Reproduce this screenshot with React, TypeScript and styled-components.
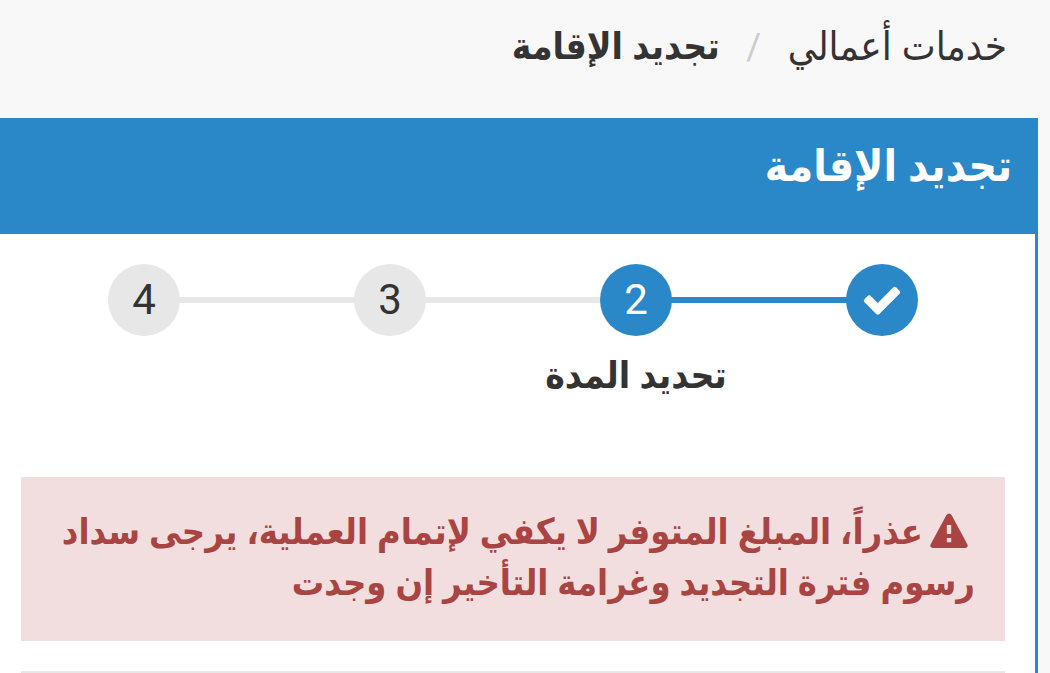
import React from "react";
import styled, { createGlobalStyle } from "styled-components";

const blue = "#2b88c8";
const grey = "#e7e7e7";
const ink = "#333333";

const GlobalStyle = createGlobalStyle`
  *, *::before, *::after { box-sizing: border-box; }
  body {
    margin: 0;
    background: #f8f8f8;
    color: ${ink};
    font-family: Roboto, "DejaVu Sans Condensed", "DejaVu Sans", sans-serif;
  }
`;

const Page = styled.div`
  min-height: 100vh;
  display: flex;
  flex-direction: column;
`;

const Breadcrumb = styled.nav`
  height: 118px;
  padding: 21px 43px 0;
`;

const Crumbs = styled.ol`
  display: flex;
  margin: 0;
  padding: 0;
  list-style: none;
  font-size: 36px;
  line-height: 52px;
`;

const Crumb = styled.li`
  display: flex;
  white-space: nowrap;

  &:not(:first-child)::before {
    content: "/";
    width: 68px;
    text-align: center;
    color: #cccccc;
  }
`;

const CrumbLink = styled.a`
  color: inherit;
  font-size: 40px;
  text-decoration: none;
`;

const CurrentCrumb = styled.span`
  font-size: 37px;
  font-weight: 700;
`;

const Panel = styled.main`
  flex: 1;
  display: flex;
  flex-direction: column;
  margin-right: 12px;
  border-right: 3px solid ${blue};
  background: #ffffff;
`;

const PanelHeader = styled.header`
  height: 116px;
  margin-right: -3px;
  padding: 18px 26px;
  background: ${blue};
  color: #ffffff;
`;

const PanelTitle = styled.h1`
  margin: 0;
  font-size: 44px;
  line-height: 60px;
  font-weight: 700;
`;

const PanelBody = styled.div`
  padding: 30px 30px 0 21px;
`;

const Steps = styled.ol`
  display: grid;
  grid-template-columns: repeat(4, 1fr);
  min-height: 213px;
  margin: 0;
  padding: 0;
  list-style: none;
`;

const Step = styled.li<{ $reached?: boolean }>`
  display: flex;
  flex-direction: column;
  align-items: center;
  position: relative;

  &:not(:first-child)::before {
    content: "";
    position: absolute;
    top: 33px;
    right: -50%;
    width: 100%;
    height: 6px;
    background: ${(p) => (p.$reached ? blue : grey)};
  }
`;

const StepCircle = styled.span<{ $active?: boolean }>`
  position: relative;
  z-index: 1;
  display: flex;
  align-items: center;
  justify-content: center;
  width: 72px;
  height: 72px;
  border-radius: 50%;
  background: ${(p) => (p.$active ? blue : grey)};
  color: ${(p) => (p.$active ? "#ffffff" : ink)};
  font-size: 42px;
  line-height: 72px;
`;

const StepLabel = styled.span`
  margin-top: 14px;
  font-size: 37px;
  line-height: 52px;
  font-weight: 700;
  white-space: nowrap;
`;

const Alert = styled.p`
  margin: 0 0 30px;
  min-height: 164px;
  padding: 30px;
  background: #f2dede;
  color: #a94442;
  font-size: 36px;
  line-height: 51px;
  font-weight: 700;
`;

const AlertIcon = styled.svg`
  width: 38px;
  height: 36px;
  margin: 0 7px;
  vertical-align: -5px;
`;

const Divider = styled.hr`
  margin: 0;
  border: 0;
  border-top: 2px solid ${grey};
`;

const CheckMark = () => (
  <svg width="42" height="42" viewBox="0 0 1792 1792" fill="currentColor" role="img" aria-label="مكتمل">
    <path d="M1671 566q0 40-28 68l-724 724-136 136q-28 28-68 28t-68-28l-136-136-362-362q-28-28-28-68t28-68l136-136q28-28 68-28t68 28l294 295 656-657q28-28 68-28t68 28l136 136q28 28 28 68z" />
  </svg>
);

const Warning = () => (
  <AlertIcon viewBox="0 0 38 36" fill="currentColor" aria-hidden="true">
    <path
      fillRule="evenodd"
      d="M16.300 2.200Q17.300.5 19 .5T21.700 2.200L37.300 31.200Q38.200 32.900 37.200 34.100Q36.400 35 35 35H3Q1.600 35 .8 34.100Q-.2 32.900.7 31.200ZM16.800 12V20.200Q16.800 20.900 17.500 20.900H20.500Q21.200 20.900 21.200 20.200V12ZM16.800 24.900V29.200H21.200V24.900Z"
    />
  </AlertIcon>
);

export default function App() {
  return (
    <Page dir="rtl" lang="ar">
      <GlobalStyle />
      <Breadcrumb>
        <Crumbs>
          <Crumb>
            <CrumbLink href="#services">خدمات أعمالي</CrumbLink>
          </Crumb>
          <Crumb>
            <CurrentCrumb aria-current="page">تجديد الإقامة</CurrentCrumb>
          </Crumb>
        </Crumbs>
      </Breadcrumb>
      <Panel>
        <PanelHeader>
          <PanelTitle>تجديد الإقامة</PanelTitle>
        </PanelHeader>
        <PanelBody>
          <Steps>
            <Step>
              <StepCircle $active>
                <CheckMark />
              </StepCircle>
            </Step>
            <Step $reached aria-current="step">
              <StepCircle $active>2</StepCircle>
              <StepLabel>تحديد المدة</StepLabel>
            </Step>
            <Step>
              <StepCircle>3</StepCircle>
            </Step>
            <Step>
              <StepCircle>4</StepCircle>
            </Step>
          </Steps>
          <Alert role="alert">
            <Warning />
            عذراً، المبلغ المتوفر لا يكفي لإتمام العملية، يرجى سداد رسوم فترة التجديد وغرامة التأخير إن وجدت
          </Alert>
          <Divider />
        </PanelBody>
      </Panel>
    </Page>
  );
}
